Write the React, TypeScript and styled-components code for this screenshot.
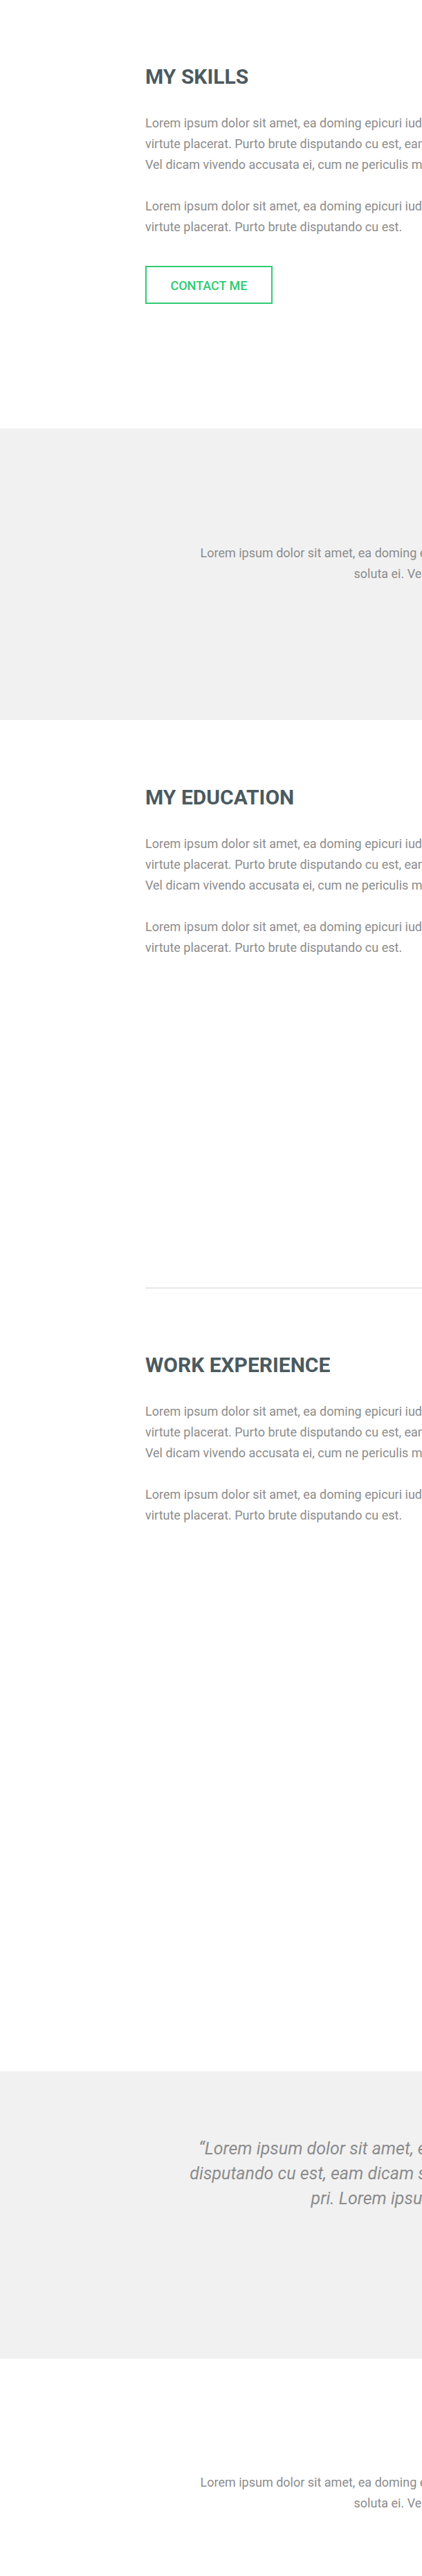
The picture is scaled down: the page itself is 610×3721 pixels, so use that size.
import React from "react";
import styled, { createGlobalStyle } from "styled-components";

const GlobalStyle = createGlobalStyle`
  html, body {
    margin: 0;
    padding: 0;
    overflow-x: hidden;
    background: #ffffff;
  }
  body {
    font-family: Roboto, "Liberation Sans", Arial, sans-serif;
  }
  * { box-sizing: border-box; }
`;

const Page = styled.div`
  width: 1588px;
`;

const Section = styled.section<{ $tone?: "plain" | "muted"; $pt: number; $pb: number }>`
  background: ${(p) => (p.$tone === "muted" ? "#f1f1f1" : "#ffffff")};
  padding: ${(p) => p.$pt}px 0 ${(p) => p.$pb}px;
`;

const Container = styled.div`
  width: 1168px;
  margin: 0 auto;
`;

const Column = styled.div`
  width: 600px;
`;

const Heading = styled.h2`
  margin: 0 0 34px;
  font-size: 30px;
  line-height: 36px;
  font-weight: 700;
  color: #4b5a5f;
  text-transform: uppercase;
`;

const Paragraph = styled.p`
  margin: 0;
  font-size: 18px;
  line-height: 30px;
  font-weight: 400;
  color: #8c8c8c;
  white-space: nowrap;

  & + & {
    margin-top: 30px;
  }
`;

const OutlineButton = styled.a`
  display: flex;
  align-items: center;
  justify-content: center;
  width: 184px;
  height: 55px;
  margin-top: 41px;
  border: 2px solid #2ecc71;
  color: #2ecc71;
  font-size: 18px;
  font-weight: 500;
  text-transform: uppercase;
  text-decoration: none;
  padding-top: 1px;
`;

const Lead = styled.p`
  margin: 0;
  text-align: center;
  font-size: 18px;
  line-height: 30px;
  color: #8c8c8c;
  white-space: nowrap;
`;

const Quote = styled.blockquote`
  margin: 0;
  text-align: center;
  font-size: 25px;
  line-height: 36px;
  font-style: italic;
  font-weight: 400;
  color: #8c8c8c;
  white-space: nowrap;
`;

const Divider = styled.hr`
  margin: 0;
  border: 0;
  border-top: 1px solid #d4d4d4;
  height: 0;
`;

const Story = () => (
  <>
    <Paragraph>
      Lorem ipsum dolor sit amet, ea doming epicuri iudicabit nam, te usu
      <br />
      virtute placerat. Purto brute disputando cu est, eam dicam soluta ei.
      <br />
      Vel dicam vivendo accusata ei, cum ne periculis mandamus, mea eu.
    </Paragraph>
    <Paragraph>
      Lorem ipsum dolor sit amet, ea doming epicuri iudicabit nam, te usu
      <br />
      virtute placerat. Purto brute disputando cu est.
    </Paragraph>
  </>
);

const LeadText = () => (
  <Lead>
    Lorem ipsum dolor sit amet, ea doming epicuri iudicabit nam, te usu virtute placerat. Purto brute disputando cu est, eam dicam
    <br />
    soluta ei. Vel dicam vivendo accusata ei, cum ne periculis maiestatis a.
  </Lead>
);

export default function App() {
  return (
    <>
      <GlobalStyle />
      <Page>
        <Section $pt={93} $pb={180}>
          <Container>
            <Column>
              <Heading>My Skills</Heading>
              <Story />
              <OutlineButton href="#contact">Contact Me</OutlineButton>
            </Column>
          </Container>
        </Section>

        <Section $tone="muted" $pt={165} $pb={196}>
          <Container>
            <LeadText />
          </Container>
        </Section>

        <Section $pt={94} $pb={476}>
          <Container>
            <Column>
              <Heading>My Education</Heading>
              <Story />
            </Column>
          </Container>
        </Section>

        <Container>
          <Divider />
        </Container>

        <Section $pt={93} $pb={788}>
          <Container>
            <Column>
              <Heading>Work Experience</Heading>
              <Story />
            </Column>
          </Container>
        </Section>

        <Section $tone="muted" $pt={94} $pb={213}>
          <Container>
            <Quote>
              “Lorem ipsum dolor sit amet, ea doming epicuri iudicabit nam, te usu virtute placerat. Purto vix
              <br />
              disputando cu est, eam dicam soluta ei. Vel dicam vivendo accusata ei, cum ne periculis ad se ut
              <br />
              pri. Lorem ipsum dolor sit amet, ea doming epicuri iudicabit vel.”
            </Quote>
          </Container>
        </Section>

        <Section $pt={164} $pb={90}>
          <Container>
            <LeadText />
          </Container>
        </Section>
      </Page>
    </>
  );
}
